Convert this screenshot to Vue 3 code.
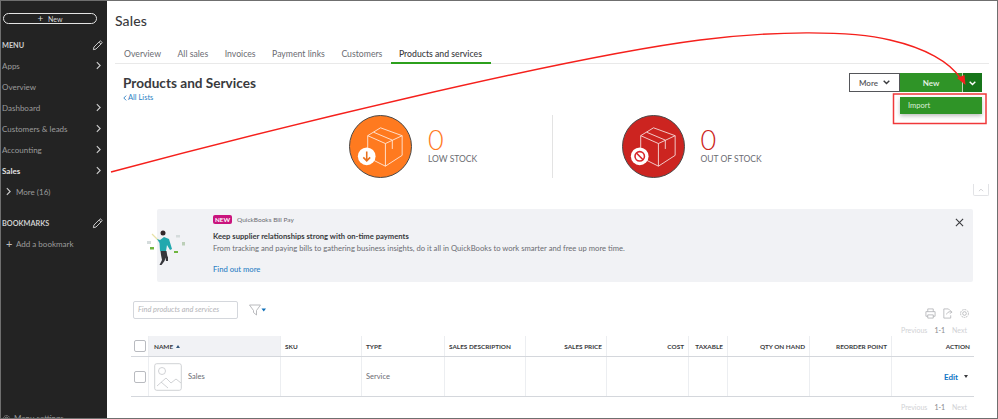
<script setup>
const menuItems = [
  { label: 'Apps', arrow: true },
  { label: 'Overview', arrow: false },
  { label: 'Dashboard', arrow: true },
  { label: 'Customers & leads', arrow: true },
  { label: 'Accounting', arrow: true },
  { label: 'Sales', arrow: true, active: true }
]

const tabs = ['Overview', 'All sales', 'Invoices', 'Payment links', 'Customers', 'Products and services']

const columns = [
  { label: 'SKU' },
  { label: 'TYPE' },
  { label: 'SALES DESCRIPTION' },
  { label: 'SALES PRICE', right: true },
  { label: 'COST', right: true },
  { label: 'TAXABLE', right: true },
  { label: 'QTY ON HAND', right: true },
  { label: 'REORDER POINT', right: true }
]
</script>

<template>
  <div class="frame">
    <aside class="sidebar">
      <button class="new-btn" type="button"><span class="plus">+</span> New</button>
      <div class="side-head">
        <span>MENU</span>
        <svg class="pencil" viewBox="0 0 12 12"><path d="M1.5 10.5l.6-2.8L8.4 1.4a1 1 0 0 1 1.5 0l.7.7a1 1 0 0 1 0 1.5L4.3 9.900zM7.600 2.300l2.100 2.100" /></svg>
      </div>
      <a v-for="item in menuItems" :key="item.label" class="side-item" :class="{ active: item.active }">
        <span>{{ item.label }}</span>
        <svg v-if="item.arrow" class="chev" viewBox="0 0 6 10"><path d="M1 1l4 4-4 4" /></svg>
      </a>
      <a class="side-item sub">
        <svg class="chev small" viewBox="0 0 6 10"><path d="M1 1l4 4-4 4" /></svg>
        <span>More (16)</span>
      </a>
      <div class="side-head bookmarks">
        <span>BOOKMARKS</span>
        <svg class="pencil" viewBox="0 0 12 12"><path d="M1.5 10.5l.6-2.8L8.4 1.4a1 1 0 0 1 1.5 0l.7.7a1 1 0 0 1 0 1.5L4.3 9.900zM7.600 2.300l2.100 2.100" /></svg>
      </div>
      <a class="side-item sub add-bookmark">
        <span class="add-plus">+</span>
        <span>Add a bookmark</span>
      </a>
      <div class="menu-settings">
        <svg class="gear" viewBox="0 0 12 12"><circle cx="6" cy="6" r="1.800" /><circle cx="6" cy="6" r="4" stroke-dasharray="2 1" /></svg>
        <span>Menu settings</span>
      </div>
    </aside>

    <main class="content">
      <h1 class="page-title">Sales</h1>
      <nav class="tabs">
        <a v-for="(tab, i) in tabs" :key="tab" class="tab" :class="{ current: i === tabs.length - 1 }">{{ tab }}</a>
      </nav>

      <div class="list-head">
        <div>
          <h2 class="list-title">Products and Services</h2>
          <a class="all-lists"><svg viewBox="0 0 6 10"><path d="M5 1L1 5l4 4" /></svg>All Lists</a>
        </div>
        <div class="actions">
          <button class="more-btn" type="button">
            More
            <svg viewBox="0 0 10 7"><path d="M1 1l4 4 4-4" /></svg>
          </button>
          <button class="new-green" type="button">New</button>
          <button class="caret-green" type="button">
            <svg viewBox="0 0 10 7"><path d="M1 1l4 4 4-4" /></svg>
          </button>
          <div class="dropdown">Import</div>
        </div>
      </div>

      <section class="stats">
        <div class="stat">
          <div class="stat-circle orange">
            <svg viewBox="0 0 62 62">
              <g class="box">
                <path d="M18 20L31 12l22 8v20L36 51l-18-9z" />
                <path d="M18 20l18 8 17-8M36 28v23M24 16.500l19 8v9" />
              </g>
              <circle cx="17" cy="41" r="9" class="badge" />
              <path class="badge-mark orange-mark" d="M17 36v9.500M13.500 42l3.500 3.500 3.500-3.500" />
            </svg>
          </div>
          <div class="stat-text">
            <div class="stat-num orange-text">0</div>
            <div class="stat-label">LOW STOCK</div>
          </div>
        </div>
        <div class="stat-divider"></div>
        <div class="stat">
          <div class="stat-circle red">
            <svg viewBox="0 0 62 62">
              <g class="box">
                <path d="M18 20L31 12l22 8v20L36 51l-18-9z" />
                <path d="M18 20l18 8 17-8M36 28v23M24 16.500l19 8v9" />
              </g>
              <circle cx="17" cy="41" r="9" class="badge" />
              <circle cx="17" cy="41" r="4.800" class="badge-mark red-mark" />
              <path class="badge-mark red-mark" d="M13.600 37.600l6.800 6.800" />
            </svg>
          </div>
          <div class="stat-text">
            <div class="stat-num red-text">0</div>
            <div class="stat-label">OUT OF STOCK</div>
          </div>
        </div>
      </section>

      <div class="collapse-row">
        <button class="collapse" type="button"><svg viewBox="0 0 10 6"><path d="M1.500 5L5 1.500 8.500 5" /></svg></button>
      </div>

      <section class="banner">
        <svg class="person" viewBox="0 0 42 42">
          <rect x="2" y="14" width="4" height="3" fill="#d5dcdc" />
          <rect x="5" y="20" width="4" height="2.500" fill="#6fb53f" />
          <rect x="31" y="8" width="4" height="2.500" fill="#d5dcdc" />
          <rect x="37" y="15" width="3" height="3.500" fill="#bccfb8" />
          <rect x="29" y="24" width="4" height="2" fill="#6fb53f" />
          <path d="M7 7l6 6" stroke="#e8e2a8" stroke-width="1.200" />
          <circle cx="18" cy="6" r="2.500" fill="#33282a" />
          <path d="M12 12l3 1 4-3 5 2 3 10-2 1-3-5-1 6h-6l-.5-8z" fill="#22a8ae" />
          <path d="M15.500 24h6l1 6-2 1-1 3-3 4-2 0 2.500-5-1-5z" fill="#35363a" />
          <path d="M20 28l3 2 0 4-2 0z" fill="#35363a" />
        </svg>
        <div class="banner-body">
          <div class="banner-top"><span class="new-pill">NEW</span><span class="banner-product">QuickBooks Bill Pay</span></div>
          <div class="banner-title">Keep supplier relationships strong with on-time payments</div>
          <div class="banner-text">From tracking and paying bills to gathering business insights, do it all in QuickBooks to work smarter and free up more time.</div>
          <a class="find-more">Find out more</a>
        </div>
        <svg class="close" viewBox="0 0 10 10"><path d="M1 1l8 8M9 1L1 9" /></svg>
      </section>

      <div class="tools">
        <div class="search">Find products and services</div>
        <svg class="filter" viewBox="0 0 17 12">
          <path class="funnel" d="M.5 1h11L7.500 6.500V11l-3-2.500v-2z" />
          <path class="filter-caret" d="M12.500 4.500h4.500L14.750 7.500z" />
        </svg>
        <div class="tool-icons">
          <svg viewBox="0 0 12 12"><path d="M3 4V1h6v3M1 4h10v5H9M3 9H1V4M3 7.500h6V11H3z" /></svg>
          <svg viewBox="0 0 12 12"><path d="M7 1H2v10h7.500V8M7 1l1.500 1.500M5 7c.5-2 2-3 4.500-3M8.500 2.500L11 4.500 8.500 6" /></svg>
          <svg viewBox="0 0 12 12"><circle cx="6" cy="6" r="2" /><circle cx="6" cy="6" r="4.300" stroke-dasharray="2 .8" /></svg>
        </div>
      </div>

      <div class="pager top-pager">
        <span>Previous</span><b>1-1</b><span>Next</span>
      </div>

      <div class="table">
        <div class="row head">
          <div class="cell check"><span class="box-check"></span></div>
          <div class="cell name-head">NAME <i class="sort"></i></div>
          <div v-for="col in columns" :key="col.label" class="cell" :class="{ right: col.right }">{{ col.label }}</div>
          <div class="cell right action-head">ACTION</div>
        </div>
        <div class="row body">
          <div class="cell check"><span class="box-check"></span></div>
          <div class="cell name-cell">
            <svg class="thumb" viewBox="0 0 28 28">
              <rect x=".7" y=".7" width="26.600" height="26.600" rx="2" />
              <circle cx="8" cy="8" r="3.500" />
              <path d="M3 23l9-8 5 5 5-4 5 4M7 19l7 6" />
            </svg>
            <span>Sales</span>
          </div>
          <div class="cell"></div>
          <div class="cell">Service</div>
          <div class="cell"></div>
          <div class="cell"></div>
          <div class="cell"></div>
          <div class="cell"></div>
          <div class="cell"></div>
          <div class="cell"></div>
          <div class="cell right edit-cell"><a>Edit</a><i class="edit-caret"></i></div>
        </div>
      </div>

      <div class="pager bottom-pager">
        <span>Previous</span><b>1-1</b><span>Next</span>
      </div>
    </main>

    <!-- red markup drawn on top of the screenshot -->
    <svg class="markup" viewBox="0 0 998 419">
      <path class="curve" d="M111 172C260 132 560 58 700 40C770 31 850 30 890 40C925 48 950 62 961 79" />
      <path class="tip" d="M965.500 85L957 78L964.500 75z" />
      <rect class="mark-box" x="893.500" y="94" width="92.500" height="29.500" />
    </svg>
  </div>
</template>

<style>
html,
body {
  margin: 0;
  background: #fff;
}
</style>

<style scoped>
.frame {
  position: relative;
  display: flex;
  width: 998px;
  height: 419px;
  box-sizing: border-box;
  overflow: hidden;
  border: 1px solid #6f6f6f;
  background: #fff;
  font-family: Lato, "Open Sans", sans-serif;
  color: #393a3d;
}

.sidebar {
  display: flex;
  flex-direction: column;
  flex: 0 0 106px;
  box-sizing: border-box;
  padding: 12px 4px 0 1px;
  background: #232323;
  color: #9c9c9c;
  font-size: 8px;
}

.new-btn {
  height: 11px;
  width: 94px;
  margin-left: 1px;
  padding: 0;
  border: 1px solid #e4e4e4;
  border-radius: 7px;
  background: transparent;
  color: #d8d8d8;
  font: 400 7px Lato, sans-serif;
  line-height: 8px;
}

.plus {
  margin-right: 3px;
  font-size: 10px;
  line-height: 8px;
}

.side-head {
  display: flex;
  align-items: center;
  justify-content: space-between;
  height: 14px;
  margin-top: 14px;
  color: #cfcfcf;
  font-size: 7.300px;
  font-weight: 700;
}

.pencil {
  width: 11px;
  height: 11px;
  fill: none;
  stroke: #d8d8d8;
  stroke-width: 1;
}

.side-item {
  display: flex;
  align-items: center;
  justify-content: space-between;
  height: 21px;
  flex: none;
}

.side-item:first-of-type {
  margin-top: 3px;
}

.side-item.active {
  color: #e2e2e2;
  font-weight: 700;
}

.side-item.sub {
  justify-content: flex-start;
  padding-left: 4px;
}

.add-bookmark {
  margin-top: 3px;
}

.chev {
  width: 5px;
  height: 9px;
  margin-right: 2px;
  fill: none;
  stroke: #d0d0d0;
  stroke-width: 1.300;
}

.chev.small {
  margin-right: 5px;
}

.add-plus {
  width: 10px;
  color: #bdbdbd;
  font-size: 11px;
}

.menu-settings {
  display: flex;
  align-items: center;
  gap: 3px;
  margin-top: auto;
  margin-bottom: -6px;
  height: 12px;
  font-size: 8px;
}

.gear {
  width: 9px;
  height: 9px;
  fill: none;
  stroke: #a8a8a8;
}

.content {
  flex: 1;
  min-width: 0;
  padding: 0 8px;
}

.page-title {
  height: 21px;
  margin: 9px 0 0;
  font-size: 14px;
  font-weight: 500;
  line-height: 21px;
  letter-spacing: 0.1px;
}

.tabs {
  display: flex;
  height: 33px;
  box-sizing: border-box;
  padding-top: 17px;
  padding-left: 9px;
  gap: 16.500px;
  border-bottom: 1.500px solid #e9e9e9;
  color: #6b6c72;
  font-size: 8.700px;
}

.tab {
  position: relative;
  white-space: nowrap;
}

.tab.current {
  color: #393a3d;
  font-weight: 500;
}

.tab.current::after {
  content: "";
  position: absolute;
  left: -8px;
  right: -9px;
  top: 14px;
  height: 2px;
  background: #2ca01c;
}

.list-head {
  display: flex;
  justify-content: space-between;
  margin: 9px 7px 0 8px;
}

.list-title {
  margin: 2px 0 0;
  font-size: 13.600px;
  font-weight: 700;
  line-height: 17px;
}

.all-lists {
  display: flex;
  align-items: center;
  gap: 1px;
  margin-top: 1px;
  color: #2b7fc4;
  font-size: 7.500px;
  line-height: 9px;
}

.all-lists svg {
  width: 4px;
  height: 6px;
  fill: none;
  stroke: #2b7fc4;
  stroke-width: 1.500;
}

.actions {
  position: relative;
  display: flex;
  height: 19px;
}

.actions button {
  box-sizing: border-box;
  height: 19px;
  padding: 0;
  font: 600 8px Lato, sans-serif;
}

.more-btn {
  display: flex;
  align-items: center;
  justify-content: center;
  gap: 5px;
  width: 51px;
  border: 1px solid #55565a;
  background: #fff;
  color: #55565a;
}

.more-btn svg,
.caret-green svg {
  width: 7px;
  height: 5px;
  fill: none;
  stroke-width: 2;
}

.more-btn svg {
  stroke: #393a3d;
}

.caret-green svg {
  stroke: #fff;
}

.new-green {
  width: 63px;
  border: 0;
  border-right: 1px solid #b9d8b3;
  background: #2f9427;
  color: #e9f5e7;
}

.caret-green {
  width: 19px;
  border: 0;
  background: #17751a;
}

.dropdown {
  position: absolute;
  top: 24px;
  right: 0;
  width: 82px;
  height: 17px;
  box-sizing: border-box;
  padding-left: 8px;
  background: #2f9427;
  box-shadow: 0 2px 4px rgba(0, 0, 0, 0.25);
  color: #dcefd9;
  font-size: 7.500px;
  line-height: 17px;
}

.stats {
  display: grid;
  grid-template-columns: 1fr 1px 1fr;
  height: 63px;
  margin-top: 13px;
}

.stat {
  display: flex;
  align-items: center;
}

.stat:first-child {
  padding-left: 234px;
}

.stat:last-child {
  padding-left: 69px;
}

.stat-divider {
  background: #e3e3e3;
}

.stat-circle {
  flex: 0 0 63px;
  box-sizing: border-box;
  width: 63px;
  height: 63px;
  border: 1px solid #4a4a4a;
  border-radius: 50%;
}

.stat-circle svg {
  display: block;
  width: 100%;
  height: 100%;
}

.orange {
  background: #ff7a1f;
}

.red {
  background: #cc2420;
}

.box {
  fill: none;
  stroke: #fff;
  stroke-width: 0.900;
  opacity: 0.85;
}

.badge {
  fill: #fff;
}

.badge-mark {
  fill: none;
  stroke-width: 1.600;
}

.orange-mark {
  stroke: #e8701d;
}

.red-mark {
  stroke: #d9252a;
}

.stat-text {
  margin: -4px 0 0 16px;
}

.stat-num {
  font-size: 27px;
  font-weight: 300;
  line-height: 27px;
}

.orange-text {
  color: #ff7a1f;
}

.red-text {
  color: #cc2420;
}

.stat-label {
  margin-top: 1px;
  color: #6b6c72;
  font-size: 8.500px;
  line-height: 10px;
}

.collapse-row {
  display: flex;
  justify-content: flex-end;
  height: 12px;
  margin-top: 6px;
}

.collapse {
  display: flex;
  align-items: center;
  justify-content: center;
  width: 16px;
  height: 12px;
  padding: 0;
  border: 1px solid #e2e3e6;
  border-top: 0;
  border-radius: 0 0 2px 2px;
  background: #fff;
}

.collapse svg {
  display: block;
  width: 6px;
  height: 4px;
  fill: none;
  stroke: #b5b6ba;
}

.banner {
  position: relative;
  display: flex;
  height: 73px;
  margin: 13px 16px 0 42px;
  border-radius: 2px;
  background: #f1f2f5;
}

.person {
  flex: 0 0 42px;
  width: 42px;
  height: 42px;
  margin: 18px 0 0 -12px;
}

.banner-body {
  margin-left: 26px;
  padding-top: 6px;
}

.banner-top {
  display: flex;
  align-items: center;
  gap: 5px;
  height: 9px;
  color: #6b6c72;
  font-size: 6.500px;
}

.new-pill {
  height: 9px;
  padding: 0 2px;
  border-radius: 2px;
  background: #c9147d;
  color: #fff;
  font-size: 6.300px;
  font-weight: 700;
  line-height: 9px;
}

.banner-title {
  margin-top: 7px;
  color: #393a3d;
  font-size: 7.650px;
  font-weight: 700;
  line-height: 10px;
  white-space: nowrap;
}

.banner-text {
  margin-top: 2px;
  color: #6b6c72;
  font-size: 7.650px;
  line-height: 10px;
  white-space: nowrap;
}

.find-more {
  display: block;
  margin-top: 10.500px;
  color: #2b7fc4;
  font-size: 7.650px;
  font-weight: 500;
  line-height: 10px;
}

.close {
  position: absolute;
  top: 9px;
  right: 9px;
  width: 9px;
  height: 9px;
  fill: none;
  stroke: #393a3d;
  stroke-width: 1.200;
}

.tools {
  display: flex;
  align-items: center;
  height: 18px;
  margin: 19px 16px 0 18px;
}

.search {
  box-sizing: border-box;
  width: 105px;
  height: 18px;
  padding-left: 4px;
  border: 1px solid #d4d7dc;
  border-radius: 2px;
  color: #b3b4b8;
  font-size: 7.400px;
  font-style: italic;
  line-height: 16px;
}

.filter {
  width: 17px;
  height: 12px;
  margin-left: 11px;
}

.funnel {
  fill: none;
  stroke: #a8a9ad;
  stroke-width: 0.800;
}

.filter-caret {
  fill: #0f6fb8;
}

.tool-icons {
  display: flex;
  gap: 6px;
  margin-left: auto;
  padding-top: 6px;
  padding-right: 3px;
}

.tool-icons svg {
  width: 11px;
  height: 11px;
  fill: none;
  stroke: #a9aaae;
  stroke-width: 0.800;
}

.pager {
  display: flex;
  justify-content: flex-end;
  gap: 7px;
  color: #d1d2d5;
  font-size: 7px;
  line-height: 9px;
}

.pager b {
  color: #8d8e92;
  font-weight: 500;
}

.top-pager {
  margin: 7px 22px 0 0;
}

.table {
  margin: 1px 15px 0 16px;
}

.row {
  display: grid;
  grid-template-columns: 18px 132px 81px 83px 81px 81px 82px 39px 82px 82px 82px;
}

.row.head {
  height: 20px;
  border-bottom: 1.500px solid #d4d7dc;
  color: #393a3d;
  font-size: 6.400px;
  font-weight: 700;
}

.row.body {
  height: 39px;
  border-bottom: 1px solid #d4d7dc;
  color: #6b6c72;
  font-size: 7.500px;
}

.cell {
  display: flex;
  align-items: center;
  box-sizing: border-box;
  min-width: 0;
  padding: 0 4px;
  border-right: 1px solid #eceef1;
  white-space: nowrap;
}

.cell.right {
  justify-content: flex-end;
}

.cell:last-child {
  border-right: 0;
}

.cell.check {
  justify-content: center;
  padding: 0;
}

.box-check {
  width: 10px;
  height: 10px;
  border: 1px solid #b9bbc0;
  border-radius: 2px;
}

.name-head {
  gap: 3px;
  padding-left: 5px;
  background: #f1f2f5;
}

.sort {
  width: 0;
  height: 0;
  border-left: 2px solid transparent;
  border-right: 2px solid transparent;
  border-bottom: 3px solid #33587c;
}

.name-cell {
  gap: 6px;
  padding-left: 5px;
}

.thumb {
  width: 28px;
  height: 28px;
  fill: none;
  stroke: #c4c6ca;
  stroke-width: 0.800;
}

.edit-cell {
  gap: 6px;
  padding-right: 6px;
}

.edit-cell a {
  color: #0f76c4;
  font-size: 8px;
  font-weight: 700;
}

.edit-caret {
  width: 0;
  height: 0;
  border-left: 2.500px solid transparent;
  border-right: 2.500px solid transparent;
  border-top: 3px solid #393a3d;
}

.bottom-pager {
  margin: 6px 22px 0 0;
}

.markup {
  position: absolute;
  top: -1px;
  left: -1px;
  width: 998px;
  height: 419px;
  pointer-events: none;
}

.curve {
  fill: none;
  stroke: #f5201c;
  stroke-width: 1.400;
}

.tip {
  fill: #f5201c;
}

.mark-box {
  fill: none;
  stroke: #f0383a;
  stroke-width: 1.500;
}
</style>
